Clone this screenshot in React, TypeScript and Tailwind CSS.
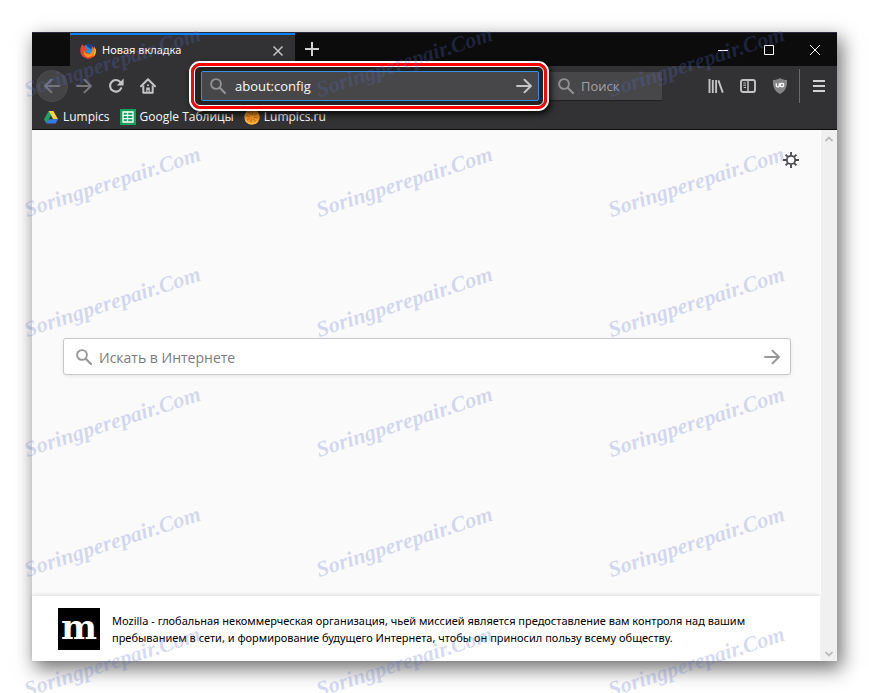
import type { ReactNode } from "react";

interface IconButtonProps {
  label: string;
  className?: string;
  children: ReactNode;
}

const WATERMARKS = Array.from({ length: 18 }, (_, i) => i);

function IconButton({ label, className = "h-8 w-8", children }: IconButtonProps) {
  return (
    <button
      type="button"
      aria-label={label}
      className={`flex shrink-0 items-center justify-center ${className}`}
    >
      {children}
    </button>
  );
}

function SearchIcon() {
  return (
    <svg width="16" height="16" viewBox="0 0 16 16" fill="none" stroke="currentColor" className="shrink-0">
      <circle cx="6" cy="6" r="4.9" strokeWidth="1.9" />
      <path d="M9.7 9.7L15 15" strokeWidth="2.2" strokeLinecap="round" />
    </svg>
  );
}

function ArrowIcon({ flip = false }: { flip?: boolean }) {
  return (
    <svg
      width="16"
      height="16"
      viewBox="0 0 16 16"
      fill="none"
      stroke="currentColor"
      strokeWidth="1.9"
      strokeLinecap="round"
      strokeLinejoin="round"
    >
      {flip ? <path d="M15 8H1M7.5 1.7L1 8L7.5 14.3" /> : <path d="M1 8H15M8.5 1.7L15 8L8.5 14.3" />}
    </svg>
  );
}

function FirefoxIcon() {
  return (
    <svg width="16" height="16" viewBox="0 0 16 16">
      <circle cx="8" cy="7" r="5.6" fill="#1495e8" />
      <path d="M6.5 1.5C9.5 .2 12.6 1.6 13.8 4L10.5 6L7 3.6Z" fill="#123f9c" />
      <path
        d="M1.2 3.2C1.8 2.8 2 2 2.2 1.3C3 1.8 3.4 2.6 3.7 3.2C4.8 3 5.8 3.3 6.5 4C5.9 4.4 5.6 4.8 5.8 5.5L7.6 6C7.3 7 6.2 7.2 5.6 8C5.6 9.8 7.6 11 9.5 10.4C12 9.8 12.9 7.5 12.2 5.2C11.9 4.2 11.6 3.6 11 3C13.2 3.6 14.2 5 14.6 6.2C14.7 5.2 14.4 4.2 14 3.4C16.3 6 16.4 9.7 14.7 12.2C12.8 15.2 9.6 16.2 6.6 15.4C2.6 14.5 0 11 0.2 7.2C.3 5.6.6 4.2 1.2 3.2Z"
        fill="#ee3f2c"
      />
      <path
        d="M4.2 7.6C4.6 10.6 7.8 11.9 10 10.6C12.3 9.4 12.9 7.4 12.2 4.8C14.4 6.6 15 9.6 13.4 11.8C11.6 14.2 8.6 14.8 6.2 13.7C3.8 12.5 3 9.8 4.2 7.6Z"
        fill="#ff8f1c"
      />
      <path d="M14 3.4C16.3 6 16.4 9.7 14.7 12.2C14.2 13 13.6 13.6 13 14C14.6 10.6 14.8 6.7 14 3.4Z" fill="#ffce2b" />
    </svg>
  );
}

function DriveIcon() {
  return (
    <svg width="14" height="13" viewBox="0 0 14 13">
      <path d="M4.6 0L7 4.2L2.4 12.4L0 8.2Z" fill="#16a765" />
      <path d="M4.6 0H9.4L14 8.2H9.2Z" fill="#ffcf44" />
      <path d="M4.7 8.2H14L11.6 12.4H2.4Z" fill="#3777e3" />
    </svg>
  );
}

function SheetsIcon() {
  return (
    <svg width="16" height="16" viewBox="0 0 16 16">
      <rect width="16" height="16" fill="#14a05c" />
      <path d="M3 3H13V13H3ZM3 6.4H13M3 9.7H13M7.5 3V13" fill="none" stroke="#fff" strokeWidth="1.3" />
    </svg>
  );
}

function OrangeIcon() {
  return (
    <svg width="16" height="16" viewBox="0 0 16 16">
      <circle cx="8" cy="8" r="7.7" fill="#f79a28" />
      <g stroke="#c06c14" strokeWidth="1" strokeLinecap="round">
        <path d="M7 5.6L4.6 3M8.4 5.4L8.6 2.4M10 6.4L12.6 4.2M10.4 8.4L13.6 8.8M9.4 10L11.4 12.4M7.4 10.2L6.8 12.8M5.8 9L3.4 10.8M5.4 7.2L2.4 6.8" />
      </g>
      <path d="M1.3 10.5C3 15 10 16.4 13.8 12" fill="none" stroke="#ffb84d" strokeWidth="1.2" />
    </svg>
  );
}

function TitleBar() {
  return (
    <div className="flex h-[34px] border-t border-[#2b2b3d] bg-[#0c0c0d] pl-[38px]">
      <div className="flex w-[225px] items-center border-t-2 border-[#0a84ff] bg-[#323234] pr-2 pl-2.5">
        <FirefoxIcon />
        <span className="ml-1.5 flex-1 font-['Noto_Sans',sans-serif] text-[11px] text-[#f9f9fa]">Новая вкладка</span>
        <IconButton label="Закрыть вкладку" className="h-5 w-[18px] text-[#c4c4c6]">
          <svg width="10" height="10" viewBox="0 0 10 10" stroke="currentColor" strokeWidth="1.5">
            <path d="M.5 .5L9.5 9.5M9.5 .5L.5 9.5" />
          </svg>
        </IconButton>
      </div>
      <IconButton label="Новая вкладка" className="h-8 w-[34px] text-[#d2d2d4]">
        <svg width="14" height="14" viewBox="0 0 14 14" stroke="currentColor" strokeWidth="2">
          <path d="M7 0V14M0 7H14" />
        </svg>
      </IconButton>
      <div className="ml-auto flex pt-px text-white">
        <IconButton label="Свернуть" className="h-8 w-11">
          <svg width="10" height="11" viewBox="0 0 10 11" stroke="currentColor">
            <path d="M0 5.5H10" />
          </svg>
        </IconButton>
        <IconButton label="Развернуть" className="h-8 w-12">
          <svg width="10" height="10" viewBox="0 0 10 10" fill="none" stroke="currentColor">
            <path d="M.5 .5H9.5V9.5H.5Z" />
          </svg>
        </IconButton>
        <IconButton label="Закрыть" className="h-8 w-11">
          <svg width="10" height="10" viewBox="0 0 10 10" stroke="currentColor">
            <path d="M0 0L10 10M10 0L0 10" />
          </svg>
        </IconButton>
      </div>
    </div>
  );
}

function NavBar() {
  return (
    <div className="flex h-10 items-center bg-[#323234] pr-0.5 pl-1 text-[#c4c4c6]">
      <IconButton label="Назад" className="h-8 w-8 rounded-full border border-[#4c4c4d] bg-[#444446] text-[#77777a]">
        <ArrowIcon flip />
      </IconButton>
      <IconButton label="Вперёд" className="h-8 w-8 text-[#77777a]">
        <ArrowIcon />
      </IconButton>
      <IconButton label="Обновить">
        <svg width="16" height="16" viewBox="0 0 16 16" fill="none" stroke="currentColor" strokeWidth="2.1">
          <path d="M13.2 10.2A5.8 5.8 0 1 1 12.4 4.2" strokeLinecap="round" />
          <path d="M15.6 .6V7.4H8.8Z" fill="currentColor" stroke="none" />
        </svg>
      </IconButton>
      <IconButton label="Домой">
        <svg width="16" height="16" viewBox="0 0 16 16" fill="none" stroke="currentColor" strokeWidth="2">
          <path d="M1 8.3L8 1.3L15 8.3" strokeLinecap="round" strokeLinejoin="round" />
          <path d="M3.3 7.5V14.8H12.7V7.5" strokeLinejoin="round" />
          <path d="M6.2 15V9.5H9.8V15H8.6V12H7.4V15ZM7 6.5H9V8H7Z" fill="currentColor" stroke="none" />
        </svg>
      </IconButton>

      <div className="relative z-10 ml-[37px] min-w-0 flex-1">
        {/* red marker frame around the address bar */}
        <div className="absolute -top-2.5 -right-2.5 -bottom-2.5 -left-3 rounded-[11px] border-2 border-white shadow-[2px_3px_6px_rgba(0,0,0,0.8)]">
          <div className="h-full rounded-[9px] border-3 border-[#fe0000]">
            <div className="h-full rounded-md border border-white bg-[#232324]" />
          </div>
        </div>
        <div className="relative flex h-[30px] items-center rounded-xs border border-[#3390e8] bg-[#474749] pr-1.5 pl-2">
          <span className="flex text-[#929294]">
            <SearchIcon />
          </span>
          <input
            type="text"
            aria-label="Адресная строка"
            defaultValue="about:config"
            className="ml-[9px] min-w-0 flex-1 bg-transparent pt-0.5 text-[13px] text-[#f9f9fa] outline-none"
          />
          <IconButton label="Перейти" className="h-6 w-4 text-[#c4c4c6]">
            <ArrowIcon />
          </IconButton>
        </div>
      </div>

      <div className="ml-2.5 flex h-7 w-[113px] items-center bg-[#474749] pl-[9px] text-[#929294] shadow-[0_1px_1px_rgba(0,0,0,0.3)]">
        <SearchIcon />
        <input
          type="text"
          aria-label="Поиск"
          placeholder="Поиск"
          className="ml-[7px] min-w-0 flex-1 bg-transparent pt-0.5 text-[13px] outline-none placeholder:text-[#a2a2a6]"
        />
      </div>

      <IconButton label="Библиотека" className="ml-[38px] h-8 w-8">
        <svg width="16" height="16" viewBox="0 0 16 16" fill="none" stroke="currentColor" strokeWidth="1.9">
          <path d="M1.5 1V15M4.8 2V15M8.1 2V15M10.4 2.4L14.8 14.6" />
        </svg>
      </IconButton>
      <IconButton label="Боковая панель">
        <svg width="16" height="16" viewBox="0 0 16 16" fill="none" stroke="currentColor" strokeWidth="1.9">
          <rect x="1" y="2" width="14" height="12" rx="2" />
          <path d="M8 2V14" strokeWidth="1.5" />
          <path d="M3.3 5H6M3.3 7.3H6M3.8 9.5H6" strokeWidth="1" />
        </svg>
      </IconButton>
      <IconButton label="uBlock Origin">
        <svg width="16" height="16" viewBox="0 0 16 16">
          <path d="M8 0C10 1.5 12.5 2 15 2C15.4 8.5 13.8 13 8 16C2.2 13 .6 8.5 1 2C3.5 2 6 1.5 8 0Z" fill="#858587" />
          <path
            d="M4.3 5.3V7.4Q4.3 8.9 5.8 8.9Q7.3 8.9 7.3 7.4V5.3"
            fill="none"
            stroke="#fff"
            strokeWidth="1.3"
          />
          <circle cx="10" cy="7.1" r="1.8" fill="none" stroke="#fff" strokeWidth="1.3" />
        </svg>
      </IconButton>
      <div className="ml-[3px] h-[34px] w-px bg-[#69696b]" />
      <IconButton label="Меню" className="ml-[3px] h-8 w-8 text-[#d2d2d4]">
        <svg width="12" height="12" viewBox="0 0 12 12" stroke="currentColor" strokeWidth="2">
          <path d="M0 1H12M0 6H12M0 11H12" />
        </svg>
      </IconButton>
    </div>
  );
}

function Bookmarks() {
  return (
    <nav className="flex h-6 items-center gap-2.5 border-b border-[#0c0c0d] bg-[#323234] pb-px pl-3 text-xs text-[#f9f9fa]">
      <a href="#lumpics" className="flex items-center gap-[5px]">
        <DriveIcon />
        Lumpics
      </a>
      <a href="#sheets" className="flex items-center gap-1">
        <SheetsIcon />
        Google Таблицы
      </a>
      <a href="#lumpics-ru" className="flex items-center gap-1">
        <OrangeIcon />
        Lumpics.ru
      </a>
    </nav>
  );
}

function NewTabPage() {
  return (
    <main className="flex min-w-0 flex-1 flex-col border-r border-white bg-[#fafafa]">
      <div className="flex justify-end pt-[22px] pr-[21px]">
        <IconButton label="Настройки" className="h-4 w-4 text-[#4d4d50]">
          <svg width="16" height="16" viewBox="0 0 16 16" fill="none" stroke="currentColor">
            <circle cx="8" cy="8" r="4.2" strokeWidth="1.8" />
            <path
              d="M8 0V3.5M8 12.5V16M0 8H3.5M12.5 8H16M2.6 2.6L4.9 4.9M11.1 11.1L13.4 13.4M13.4 2.6L11.1 4.9M4.9 11.1L2.6 13.4"
              strokeWidth="1.9"
            />
          </svg>
        </IconButton>
      </div>

      <form
        className="mt-[170px] mr-[29px] ml-[31px] flex h-[37px] items-center rounded-[3px] border border-[#c8c8ca] bg-white pr-2.5 pl-3 text-[#97979a] shadow-[0_1px_4px_rgba(12,12,13,0.08)]"
        onSubmit={(e) => e.preventDefault()}
      >
        <SearchIcon />
        <input
          type="text"
          aria-label="Искать в Интернете"
          placeholder="Искать в Интернете"
          className="ml-[7px] min-w-0 flex-1 bg-transparent pt-0.5 text-sm outline-none placeholder:text-[#7b7b7e]"
        />
        <IconButton label="Найти" className="h-6 w-4">
          <ArrowIcon />
        </IconButton>
      </form>

      <footer className="mt-auto flex h-[65px] items-center gap-3 bg-white pr-12 pl-[26px] shadow-[0_-1px_4px_rgba(12,12,13,0.12)]">
        <div className="flex h-[42px] w-[42px] shrink-0 items-center justify-center bg-black pb-0.5 font-['DejaVu_Serif',serif] text-[34px] font-bold text-white">
          m
        </div>
        <p className="font-['Noto_Sans',sans-serif] text-[11px] leading-[17px] text-black">
          Mozilla - глобальная некоммерческая организация, чьей миссией является предоставление вам контроля над вашим
          пребыванием в сети, и формирование будущего Интернета, чтобы он приносил пользу всему обществу.
        </p>
      </footer>
    </main>
  );
}

function ScrollBar() {
  return (
    <div className="flex w-4 flex-col items-center justify-between bg-[#f0f0f0] pt-1.5 pb-1 text-[#bcbcbc]">
      <svg width="8" height="6" viewBox="0 0 8 6" fill="none" stroke="currentColor" strokeWidth="1.8">
        <path d="M.5 5L4 1.5L7.5 5" />
      </svg>
      <svg width="8" height="6" viewBox="0 0 8 6" fill="none" stroke="currentColor" strokeWidth="1.8">
        <path d="M.5 1L4 4.5L7.5 1" />
      </svg>
    </div>
  );
}

export default function App() {
  return (
    <div className="relative flex min-h-screen overflow-hidden bg-white p-8 font-['Open_Sans','Noto_Sans',sans-serif]">
      <div className="flex min-w-0 flex-1 flex-col shadow-[4px_7px_18px_1px_rgba(0,0,0,0.55)]">
        <TitleBar />
        <NavBar />
        <Bookmarks />
        <div className="flex flex-1">
          <NewTabPage />
          <ScrollBar />
        </div>
      </div>

      {/* tiled watermark over the whole page */}
      <div
        aria-hidden="true"
        className="pointer-events-none absolute -top-5 left-7 z-20 grid auto-rows-[120px] grid-cols-[292px_292px_292px]"
      >
        {WATERMARKS.map((i) => (
          <span
            key={i}
            className="origin-bottom-left -rotate-18 self-end justify-self-start font-['Liberation_Serif',serif] text-[22px] leading-5 font-bold whitespace-nowrap text-[#5a6ec8]/25 italic"
          >
            Soringperepair.Com
          </span>
        ))}
      </div>
    </div>
  );
}
